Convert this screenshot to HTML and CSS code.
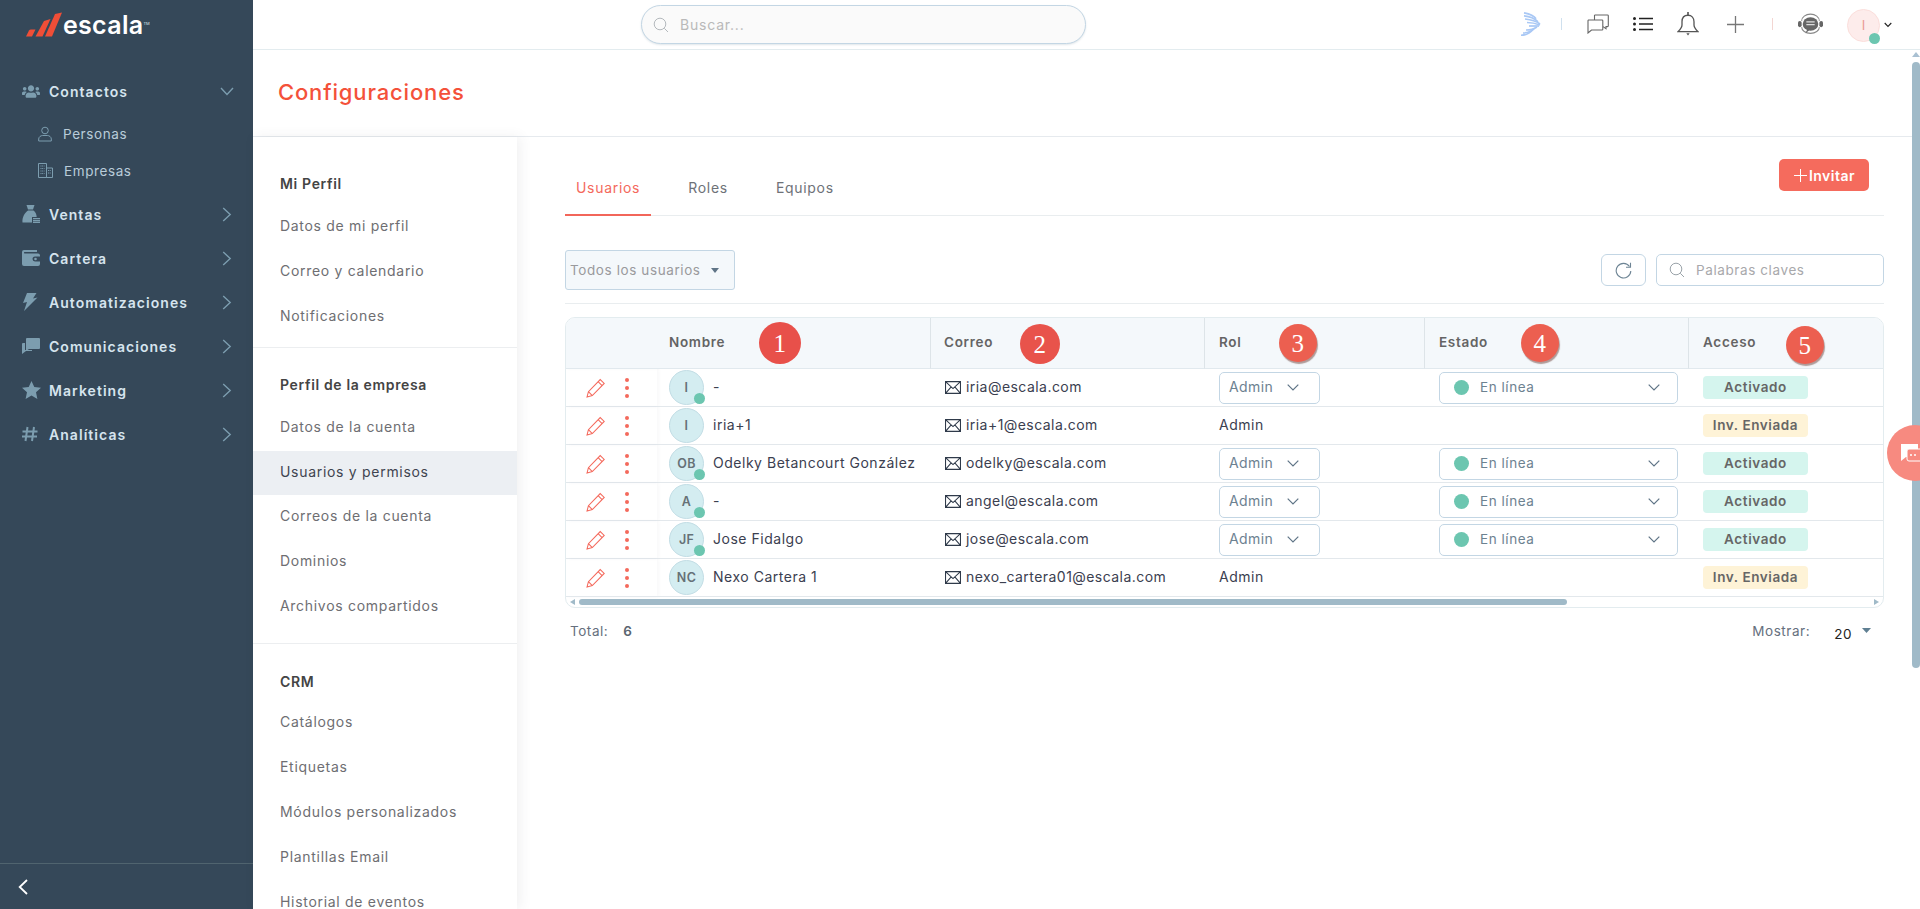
FILE: index.html
```html
<!DOCTYPE html>
<html lang="es">
<head>
<meta charset="utf-8">
<title>Configuraciones</title>
<link rel="stylesheet" href="styles.css">
</head>
<body>
<div class="app">
  <aside class="sidebar">
    <div class="logo">
      <svg class="logo-mark" width="36" height="25" viewBox="0 0 36 25"><path d="M0 24.500L3 18.500Q3.500 17.500 5 17.500L9.500 17.500L6 24.500Z" fill="#f04e37"/><path d="M9.500 24.500L18 9L24.500 7L16.500 24.500Z" fill="#f04e37"/><path d="M19 24.500L29 2L36 .500L26 24.500Z" fill="#f04e37"/></svg>
      <span class="logo-text">escala</span><span class="logo-tm">TM</span>
    </div>
    <nav class="nav">
      <a class="nav-row"><span class="nav-ico"><svg width="18" height="15" viewBox="0 0 640 512"><path fill="#7c9daf" d="M96 224c35.300 0 64-28.700 64-64s-28.700-64-64-64-64 28.700-64 64 28.700 64 64 64zm448 0c35.300 0 64-28.700 64-64s-28.700-64-64-64-64 28.700-64 64 28.700 64 64 64zm32 32h-64c-17.600 0-33.500 7.100-45.100 18.600 40.300 22.100 68.900 62 75.100 109.400h66c17.700 0 32-14.300 32-32v-32c0-35.300-28.700-64-64-64zm-256 0c61.900 0 112-50.100 112-112S381.900 32 320 32 208 82.100 208 144s50.100 112 112 112zm76.800 32h-8.300c-20.800 10-43.900 16-68.500 16s-47.600-6-68.500-16h-8.300C179.600 288 128 339.600 128 403.200V432c0 26.500 21.500 48 48 48h288c26.500 0 48-21.500 48-48v-28.800c0-63.600-51.600-115.200-115.200-115.200zm-223.700-13.400C161.500 263.100 145.600 256 128 256H64c-35.300 0-64 28.700-64 64v32c0 17.700 14.300 32 32 32h65.900c6.300-47.400 34.900-87.300 75.200-109.400z"/></svg></span><span>Contactos</span><svg class="chev-down" width="14" height="9" viewBox="0 0 14 9"><path d="M1 1l6 6.500L13 1" fill="none" stroke="#7c9daf" stroke-width="1.400"/></svg></a>
      <div class="subnav">
        <a class="sub-row"><svg width="14" height="16" viewBox="0 0 14 16"><circle cx="7" cy="4.500" r="3.300" fill="none" stroke="#7c9daf"/><path d="M.7 15v-2c0-2 2-3.500 4-3.500h4.600c2 0 4 1.500 4 3.500v2z" fill="none" stroke="#7c9daf"/></svg><span>Personas</span></a>
        <a class="sub-row"><svg width="15" height="15" viewBox="0 0 15 15"><path d="M.5 14.500V.500h8v14zM8.500 5h6v9.500h-6z" fill="none" stroke="#7c9daf"/><path d="M2.500 3h4M2.500 5.500h4M2.500 8h4M2.500 10.500h4M10 7.500h3M10 10h3" stroke="#7c9daf" stroke-dasharray="1 .7"/></svg><span>Empresas</span></a>
      </div>
      <a class="nav-row"><span class="nav-ico"><svg width="18" height="18" viewBox="0 0 18 18"><path d="M4.500 0h8l-1.500 4.500H6z" fill="#7c9daf"/><path d="M6 5.500h5.500c2 1.500 3 3.500 3.200 6.500H10v5.500H.5C0 12.500 2.500 8 6 5.500z" fill="#7c9daf"/><path d="M11 13h7v1.200h-7zM11 15h7v1.200h-7zM11 16.800h7V18h-7z" fill="#7c9daf"/></svg></span><span>Ventas</span><svg class="chev-right" width="10" height="15" viewBox="0 0 10 15"><path d="M1.200 1l7 6.500-7 6.500" fill="none" stroke="#7c9daf" stroke-width="1.400"/></svg></a>
      <a class="nav-row"><span class="nav-ico"><svg width="18" height="16" viewBox="0 0 18 16"><path d="M2 0h13v2H2.500a.800.800 0 0 0 0 1.500H16a2 2 0 0 1 2 2v1h-5a2.500 2.500 0 0 0 0 5h5v2.500a2 2 0 0 1-2 2H2a2 2 0 0 1-2-2V2a2 2 0 0 1 2-2z" fill="#7c9daf"/><circle cx="13.500" cy="9" r="1.300" fill="#7c9daf"/></svg></span><span>Cartera</span><svg class="chev-right" width="10" height="15" viewBox="0 0 10 15"><path d="M1.200 1l7 6.500-7 6.500" fill="none" stroke="#7c9daf" stroke-width="1.400"/></svg></a>
      <a class="nav-row"><span class="nav-ico"><svg width="16" height="18" viewBox="0 0 16 18"><path d="M5 0h9.500L11 5.500l4.500-1L2 18l3-9-4 1z" fill="#7c9daf"/></svg></span><span>Automatizaciones</span><svg class="chev-right" width="10" height="15" viewBox="0 0 10 15"><path d="M1.200 1l7 6.500-7 6.500" fill="none" stroke="#7c9daf" stroke-width="1.400"/></svg></a>
      <a class="nav-row"><span class="nav-ico"><svg width="18" height="16" viewBox="0 0 18 16"><path d="M5 0h12a1 1 0 0 1 1 1v9a1 1 0 0 1-1 1H7l-3 2V1a1 1 0 0 1 1-1z" fill="#7c9daf"/><path d="M0 6a1 1 0 0 1 1-1h2v7h7v1H4l-4 3z" fill="#7c9daf"/></svg></span><span>Comunicaciones</span><svg class="chev-right" width="10" height="15" viewBox="0 0 10 15"><path d="M1.200 1l7 6.500-7 6.500" fill="none" stroke="#7c9daf" stroke-width="1.400"/></svg></a>
      <a class="nav-row"><span class="nav-ico"><svg width="19" height="18" viewBox="0 0 19 18"><path d="M9.500 0l2.800 6 6.700.800-5 4.500 1.400 6.700-5.900-3.400L3.600 18 5 11.300 0 6.800 6.700 6z" fill="#7c9daf"/></svg></span><span>Marketing</span><svg class="chev-right" width="10" height="15" viewBox="0 0 10 15"><path d="M1.200 1l7 6.500-7 6.500" fill="none" stroke="#7c9daf" stroke-width="1.400"/></svg></a>
      <a class="nav-row"><span class="nav-ico"><svg width="16" height="16" viewBox="0 0 16 16"><path d="M5.500 1L3.500 15M12 1l-2 14M.5 5.500h15M0 10.500h15" fill="none" stroke="#7c9daf" stroke-width="2"/></svg></span><span>Analíticas</span><svg class="chev-right" width="10" height="15" viewBox="0 0 10 15"><path d="M1.200 1l7 6.500-7 6.500" fill="none" stroke="#7c9daf" stroke-width="1.400"/></svg></a>
    </nav>
    <div class="side-foot"><svg width="10" height="16" viewBox="0 0 10 16"><path d="M9 1L1.700 8 9 15" fill="none" stroke="#fff" stroke-width="1.800"/></svg></div>
  </aside>

  <div class="main">
    <header class="topbar">
      <div class="global-search">
        <svg width="16" height="16" viewBox="0 0 16 16"><circle cx="7" cy="7" r="5.800" fill="none" stroke="#b4b9bd"/><path d="M11.300 11.300L15 15" stroke="#b4b9bd"/></svg>
        <span>Buscar...</span>
      </div>
      <div class="top-icons">
        <svg class="t-bird" width="20" height="24" viewBox="0 0 20 24"><g fill="none" stroke="#a9c8f5" stroke-width="1.700"><path d="M3 .800c5 1 10 3 12 6"/><path d="M3 3.800c5 .500 11 3 14 6"/><path d="M4 7c5 .500 11 2 15 5"/><path d="M6 10.500c4 0 9 1 13 2.500"/><path d="M8 14c4 0 7 0 10 0"/><path d="M5 18c4 0 8-1 11-3"/><path d="M2 21c4 0 8-1 12-5"/><path d="M0 23.300c5 0 9-2 12-6"/></g></svg>
        <i class="sep sep-blue"></i>
        <svg class="t-chat" width="22" height="20" viewBox="0 0 22 20"><g fill="none" stroke="#666" stroke-width="1.100"><path d="M7.500 1h13a.800.800 0 0 1 .800.800v10a.800.800 0 0 1-.800.800h-1.500v2l-3-2"/><path d="M7.500 1v5"/><path d="M1.500 6h13.500a.800.800 0 0 1 .800.800v8.400a.800.800 0 0 1-.800.800H4.500l-3.500 3V6.800a.800.800 0 0 1 .500-.800z"/></g></svg>
        <svg class="t-list" width="20" height="14" viewBox="0 0 20 14"><path d="M6 1.500h14M6 7h14M6 12.500h14" stroke="#222" stroke-width="1.500"/><circle cx="1.500" cy="1.500" r="1.500" fill="#222"/><circle cx="1.500" cy="7" r="1.500" fill="#222"/><circle cx="1.500" cy="12.500" r="1.500" fill="#222"/></svg>
        <svg class="t-bell" width="22" height="24" viewBox="0 0 20 22"><path d="M10 3c-3.500 0-5.500 2.500-5.500 6v3c0 2-1.500 4-3.700 6h18.400c-2.200-2-3.700-4-3.700-6V9c0-3.500-2-6-5.500-6z" fill="none" stroke="#555" stroke-width="1.200"/><path d="M10 0v3" stroke="#555" stroke-width="1.500"/><path d="M8.500 19.500h3l-1.500 2z" fill="#555"/></svg>
        <svg class="t-plus" width="17" height="17" viewBox="0 0 17 17"><path d="M8.500 0v17M0 8.500h17" stroke="#777" stroke-width="1.300"/></svg>
        <i class="sep sep-pink"></i>
        <svg class="t-head" width="25" height="22" viewBox="0 0 24 20"><path d="M3.500 7a8.500 6.500 0 0 1 17 0M3.500 13a8.500 6 0 0 0 17 0" fill="none" stroke="#888"/><rect x="0" y="7" width="3.500" height="6" rx="1.700" fill="#666"/><rect x="20.500" y="7" width="3.500" height="6" rx="1.700" fill="#666"/><ellipse cx="12" cy="10" rx="7.500" ry="6.500" fill="#666"/><path d="M7 19l2.500-5h3.500z" fill="#666"/><path d="M8 8h8M8 10.500h8" stroke="#ddd" stroke-width="1.200"/></svg>
        <div class="me"><span>I</span><i class="me-dot"></i></div>
        <svg class="t-chev" width="8" height="6" viewBox="0 0 8 6"><path d="M.7 1l3.300 3.400L7.300 1" fill="none" stroke="#222" stroke-width="1.100"/></svg>
      </div>
    </header>

    <div class="below">
      <div class="page">
        <h1 class="page-title">Configuraciones</h1>
        <div class="page-body">
          <div class="panel">
            <section class="p-sec p-first">
              <h3>Mi Perfil</h3>
              <a>Datos de mi perfil</a><a>Correo y calendario</a><a>Notificaciones</a>
            </section>
            <section class="p-sec p-second">
              <h3>Perfil de la empresa</h3>
              <a>Datos de la cuenta</a><a class="on">Usuarios y permisos</a><a>Correos de la cuenta</a><a>Dominios</a><a>Archivos compartidos</a>
            </section>
            <section class="p-sec p-third">
              <h3>CRM</h3>
              <a>Catálogos</a><a>Etiquetas</a><a>Módulos personalizados</a><a>Plantillas Email</a><a>Historial de eventos</a>
            </section>
          </div>

          <div class="content">
            <div class="tabs">
              <a class="tab tab-on">Usuarios</a><a class="tab">Roles</a><a class="tab">Equipos</a>
              <button class="invite"><svg width="15" height="15" viewBox="0 0 15 15"><path d="M7.500 1v13M1 7.500h13" stroke="#fff"/></svg>Invitar</button>
            </div>
            <div class="toolbar">
              <div class="filter"><span>Todos los usuarios</span><svg width="8" height="5" viewBox="0 0 8 5"><path d="M0 0h8L4 5z" fill="#5f7486"/></svg></div>
              <div class="tools">
                <button class="refresh"><svg width="17" height="17" viewBox="0 0 17 17"><path d="M14.500 4.500A7.300 7.300 0 1 0 15.800 9" fill="none" stroke="#6d8494" stroke-width="1.100"/><path d="M15.500 .800v4.500H11" fill="none" stroke="#6d8494" stroke-width="1.100"/></svg></button>
                <div class="kw"><svg width="16" height="16" viewBox="0 0 16 16"><circle cx="7" cy="7" r="5.800" fill="none" stroke="#9aa3a9"/><path d="M11.300 11.300L15 15" stroke="#9aa3a9"/></svg><span>Palabras claves</span></div>
              </div>
            </div>

            <div class="table-wrap">
              <table class="users">
                <colgroup><col class="c1"><col class="c2"><col class="c3"><col class="c4"><col class="c5"><col class="c6"></colgroup>
                <thead>
                  <tr>
                    <th class="th-act"></th>
                    <th>Nombre<b class="num n1">1</b></th>
                    <th class="th-mail">Correo<b class="num n2">2</b></th>
                    <th class="th-rol">Rol<b class="num n3">3</b></th>
                    <th class="th-est">Estado<b class="num n4">4</b></th>
                    <th class="th-acc">Acceso<b class="num n5">5</b></th>
                  </tr>
                </thead>
                <tbody>
                  <tr>
                    <td class="act"><div class="act-in"><svg width="20" height="20" viewBox="0 0 19 19"><path d="M1 18l1.300-5L13.500 1.500l3.800 3.700L6 16.700zM11.500 3.500l3.800 3.800M2.300 13L6 16.700" fill="none" stroke="#f4695c"/></svg><span class="dots"><i></i><i></i><i></i></span></div></td>
                    <td><div class="who"><span class="av">I<i class="on-dot"></i></span><span class="tx">-</span></div></td>
                    <td class="td-mail"><div class="mail"><svg width="16" height="13" viewBox="0 0 15 12"><path d="M.5.500h14v11H.5zM.5.500L7.500 7l7-6.500M.5 11.500l5.300-6M14.500 11.500l-5.300-6" fill="none" stroke="#2f3a4a"/></svg><span class="tx">iria@escala.com</span></div></td>
                    <td class="td-rol"><div class="sel sel-rol"><span class="tx">Admin</span><svg width="12" height="7" viewBox="0 0 12 7"><path d="M.7.700L6 6l5.300-5.300" fill="none" stroke="#5f7486" stroke-width="1.200"/></svg></div></td>
                    <td class="td-est"><div class="sel sel-est"><i class="st-dot"></i><span class="tx">En línea</span><svg width="12" height="7" viewBox="0 0 12 7"><path d="M.7.700L6 6l5.300-5.300" fill="none" stroke="#5f7486" stroke-width="1.200"/></svg></div></td>
                    <td class="td-acc"><span class="pill pill-on">Activado</span></td>
                  </tr>
                  <tr>
                    <td class="act"><div class="act-in"><svg width="20" height="20" viewBox="0 0 19 19"><path d="M1 18l1.300-5L13.500 1.500l3.800 3.700L6 16.700zM11.500 3.500l3.800 3.800M2.300 13L6 16.700" fill="none" stroke="#f4695c"/></svg><span class="dots"><i></i><i></i><i></i></span></div></td>
                    <td><div class="who"><span class="av">I</span><span class="tx">iria+1</span></div></td>
                    <td class="td-mail"><div class="mail"><svg width="16" height="13" viewBox="0 0 15 12"><path d="M.5.500h14v11H.5zM.5.500L7.500 7l7-6.500M.5 11.500l5.300-6M14.500 11.500l-5.300-6" fill="none" stroke="#2f3a4a"/></svg><span class="tx">iria+1@escala.com</span></div></td>
                    <td class="td-rol"><span class="plain tx">Admin</span></td>
                    <td class="td-est"></td>
                    <td class="td-acc"><span class="pill pill-inv">Inv. Enviada</span></td>
                  </tr>
                  <tr>
                    <td class="act"><div class="act-in"><svg width="20" height="20" viewBox="0 0 19 19"><path d="M1 18l1.300-5L13.500 1.500l3.800 3.700L6 16.700zM11.500 3.500l3.800 3.800M2.300 13L6 16.700" fill="none" stroke="#f4695c"/></svg><span class="dots"><i></i><i></i><i></i></span></div></td>
                    <td><div class="who"><span class="av">OB<i class="on-dot"></i></span><span class="tx">Odelky Betancourt González</span></div></td>
                    <td class="td-mail"><div class="mail"><svg width="16" height="13" viewBox="0 0 15 12"><path d="M.5.500h14v11H.5zM.5.500L7.500 7l7-6.500M.5 11.500l5.300-6M14.500 11.500l-5.300-6" fill="none" stroke="#2f3a4a"/></svg><span class="tx">odelky@escala.com</span></div></td>
                    <td class="td-rol"><div class="sel sel-rol"><span class="tx">Admin</span><svg width="12" height="7" viewBox="0 0 12 7"><path d="M.7.700L6 6l5.300-5.300" fill="none" stroke="#5f7486" stroke-width="1.200"/></svg></div></td>
                    <td class="td-est"><div class="sel sel-est"><i class="st-dot"></i><span class="tx">En línea</span><svg width="12" height="7" viewBox="0 0 12 7"><path d="M.7.700L6 6l5.300-5.300" fill="none" stroke="#5f7486" stroke-width="1.200"/></svg></div></td>
                    <td class="td-acc"><span class="pill pill-on">Activado</span></td>
                  </tr>
                  <tr>
                    <td class="act"><div class="act-in"><svg width="20" height="20" viewBox="0 0 19 19"><path d="M1 18l1.300-5L13.500 1.500l3.800 3.700L6 16.700zM11.500 3.500l3.800 3.800M2.300 13L6 16.700" fill="none" stroke="#f4695c"/></svg><span class="dots"><i></i><i></i><i></i></span></div></td>
                    <td><div class="who"><span class="av">A<i class="on-dot"></i></span><span class="tx">-</span></div></td>
                    <td class="td-mail"><div class="mail"><svg width="16" height="13" viewBox="0 0 15 12"><path d="M.5.500h14v11H.5zM.5.500L7.500 7l7-6.500M.5 11.500l5.300-6M14.500 11.500l-5.300-6" fill="none" stroke="#2f3a4a"/></svg><span class="tx">angel@escala.com</span></div></td>
                    <td class="td-rol"><div class="sel sel-rol"><span class="tx">Admin</span><svg width="12" height="7" viewBox="0 0 12 7"><path d="M.7.700L6 6l5.300-5.300" fill="none" stroke="#5f7486" stroke-width="1.200"/></svg></div></td>
                    <td class="td-est"><div class="sel sel-est"><i class="st-dot"></i><span class="tx">En línea</span><svg width="12" height="7" viewBox="0 0 12 7"><path d="M.7.700L6 6l5.300-5.300" fill="none" stroke="#5f7486" stroke-width="1.200"/></svg></div></td>
                    <td class="td-acc"><span class="pill pill-on">Activado</span></td>
                  </tr>
                  <tr>
                    <td class="act"><div class="act-in"><svg width="20" height="20" viewBox="0 0 19 19"><path d="M1 18l1.300-5L13.500 1.500l3.800 3.700L6 16.700zM11.500 3.500l3.800 3.800M2.300 13L6 16.700" fill="none" stroke="#f4695c"/></svg><span class="dots"><i></i><i></i><i></i></span></div></td>
                    <td><div class="who"><span class="av">JF<i class="on-dot"></i></span><span class="tx">Jose Fidalgo</span></div></td>
                    <td class="td-mail"><div class="mail"><svg width="16" height="13" viewBox="0 0 15 12"><path d="M.5.500h14v11H.5zM.5.500L7.500 7l7-6.500M.5 11.500l5.300-6M14.500 11.500l-5.300-6" fill="none" stroke="#2f3a4a"/></svg><span class="tx">jose@escala.com</span></div></td>
                    <td class="td-rol"><div class="sel sel-rol"><span class="tx">Admin</span><svg width="12" height="7" viewBox="0 0 12 7"><path d="M.7.700L6 6l5.300-5.300" fill="none" stroke="#5f7486" stroke-width="1.200"/></svg></div></td>
                    <td class="td-est"><div class="sel sel-est"><i class="st-dot"></i><span class="tx">En línea</span><svg width="12" height="7" viewBox="0 0 12 7"><path d="M.7.700L6 6l5.300-5.300" fill="none" stroke="#5f7486" stroke-width="1.200"/></svg></div></td>
                    <td class="td-acc"><span class="pill pill-on">Activado</span></td>
                  </tr>
                  <tr>
                    <td class="act"><div class="act-in"><svg width="20" height="20" viewBox="0 0 19 19"><path d="M1 18l1.300-5L13.500 1.500l3.800 3.700L6 16.700zM11.500 3.500l3.800 3.800M2.300 13L6 16.700" fill="none" stroke="#f4695c"/></svg><span class="dots"><i></i><i></i><i></i></span></div></td>
                    <td><div class="who"><span class="av">NC</span><span class="tx">Nexo Cartera 1</span></div></td>
                    <td class="td-mail"><div class="mail"><svg width="16" height="13" viewBox="0 0 15 12"><path d="M.5.500h14v11H.5zM.5.500L7.500 7l7-6.500M.5 11.500l5.300-6M14.500 11.500l-5.300-6" fill="none" stroke="#2f3a4a"/></svg><span class="tx">nexo_cartera01@escala.com</span></div></td>
                    <td class="td-rol"><span class="plain tx">Admin</span></td>
                    <td class="td-est"></td>
                    <td class="td-acc"><span class="pill pill-inv">Inv. Enviada</span></td>
                  </tr>
                </tbody>
              </table>
              <div class="hscroll">
                <i class="arr-l"></i>
                <i class="hthumb"></i>
                <i class="arr-r"></i>
              </div>
            </div>

            <div class="tfoot">
              <div class="total">Total:<b>6</b></div>
              <div class="show"><span>Mostrar:</span><em>20</em><svg width="9" height="5" viewBox="0 0 9 5"><path d="M0 0h9L4.500 5z" fill="#5f7f92"/></svg></div>
            </div>
          </div>
        </div>
      </div>
      <div class="rail"><i class="rail-up"></i><i class="rail-thumb"></i></div>
    </div>
  </div>

  <div class="fab"><svg width="24" height="22" viewBox="0 0 24 22"><path d="M1 1h17v13H6l-5 4z" fill="#fff"/><rect x="7" y="6" width="17" height="12" rx="2" fill="#f78a80" stroke="#fff"/><circle cx="11" cy="12" r="1" fill="#fff"/><circle cx="15" cy="12" r="1" fill="#fff"/></svg></div>
</div>
</body>
</html>
```

FILE: styles.css
```css
* { box-sizing: border-box; }
html, body { margin: 0; height: 100%; overflow: hidden; }
body { font-family: Inter, "Open Sans", sans-serif; font-size: 14px; color: #333; background: #fff; }
a { display: block; }
i { display: block; font-style: normal; }

.app { position: relative; display: flex; width: 1920px; height: 909px; overflow: hidden; }

/* Sidebar */
.sidebar { flex: 0 0 253px; display: flex; flex-direction: column; background: #354859; color: #d6e4ee; }
.logo { height: 69px; padding: 12px 0 0 26px; display: flex; align-items: flex-start; }
.logo-mark { flex: none; }
.logo-text { margin-left: 1px; font-size: 25px; line-height: 27px; font-weight: 600; color: #fff; letter-spacing: .3px; }
.logo-tm { font-size: 4px; line-height: 8px; margin-top: 8px; color: #dfe6ea; }
.nav-row { display: flex; align-items: center; height: 44px; padding-left: 22px; font-weight: 600; font-size: 14px; letter-spacing: 1.05px; color: #d6e4ee; }
.nav-ico { flex: 0 0 27px; display: flex; align-items: center; }
.chev-right { margin-left: auto; margin-right: 21px; }
.chev-down { margin-left: auto; margin-right: 19px; }
.subnav { padding: 2px 0 3px; }
.sub-row { display: flex; align-items: center; gap: 13px; height: 37px; padding-left: 38px; font-size: 13.500px; letter-spacing: .6px; color: #b9ccd9; }
.sub-row svg { flex: 0 0 auto; margin-right: -2px; }
.side-foot { margin-top: auto; height: 46px; border-top: 1px solid #50646f; display: flex; align-items: center; padding-left: 18px; }

/* Main */
.main { flex: 1; min-width: 0; display: flex; flex-direction: column; }
.topbar { flex: 0 0 50px; border-bottom: 1px solid #e3ecef; display: flex; align-items: flex-start; padding: 5px 0 0 388px; }
.global-search { width: 445px; height: 39px; border: 1px solid #c3d6e4; border-radius: 20px; background: #fafafa; box-shadow: 0 1px 2px rgba(100,130,150,.2); display: flex; align-items: center; padding-left: 11px; gap: 11px; color: #b9b9b9; font-size: 14px; letter-spacing: .8px; }
.top-icons { margin-left: auto; display: flex; align-items: center; height: 38px; padding-right: 28px; }
.sep { width: 1px; height: 12px; }
.sep-blue { background: #cfe0ee; margin-left: 20px; }
.sep-pink { background: #f3d6d2; margin-left: 28px; }
.t-chat { margin-left: 25px; }
.t-list { margin-left: 24px; }
.t-bell { margin-left: 24px; }
.t-plus { margin-left: 28px; }
.t-head { margin-left: 25px; }
.me { position: relative; margin: 2px 0 0 24px; width: 33px; height: 33px; border-radius: 50%; background: #fdeceb; border: 1px solid #fbdedb; display: flex; align-items: center; justify-content: center; color: #ea9a92; font-size: 13px; }
.me-dot { position: absolute; right: -1px; bottom: -3px; width: 11px; height: 11px; border-radius: 50%; background: #6cc6b0; }
.t-chev { margin: 2px 0 0 4px; }

.below { flex: 1; min-height: 0; display: flex; }
.page { flex: 1; min-width: 0; display: flex; flex-direction: column; }
.page-title { flex: 0 0 87px; margin: 0; padding: 0 0 2px 25px; display: flex; align-items: center; border-bottom: 1px solid #e6eaee; font-size: 22px; font-weight: 500; letter-spacing: .85px; color: #f4513a; }
.page-body { flex: 1; min-height: 0; display: flex; }

/* Settings panel */
.panel { flex: 0 0 264px; background: #fff; box-shadow: 3px 0 12px rgba(60,70,80,.08); overflow: hidden; position: relative; }
.p-sec h3 { margin: 0 0 2px; height: 38px; display: flex; align-items: center; padding: 0 0 2px 27px; font-size: 14px; font-weight: 600; letter-spacing: .65px; color: #444; }
.p-sec a { height: 45px; padding: 0 0 4px 27px; display: flex; align-items: center; font-size: 14px; letter-spacing: .7px; color: #6e6e72; }
.p-sec a.on { height: 44px; background: #eceff3; color: #3f4450; }
.p-first { padding: 28px 0 7px; border-bottom: 1px solid #eceef0; }
.p-second { padding: 18px 0 13px; border-bottom: 1px solid #eceef0; }
.p-third { padding: 18px 0 0; }
.p-third h3 { margin-bottom: 1px; padding-bottom: 0; }

/* Content */
.content { flex: 1; min-width: 0; padding: 0 28px 0 48px; }
.tabs { position: relative; display: flex; align-items: flex-start; height: 79px; border-bottom: 1px solid #e9edef; gap: 26px; }
.tab { height: 79px; padding: 40px 11px 0; line-height: 22px; font-size: 14px; letter-spacing: .7px; color: #6e7278; }
.tab-on { color: #f4695c; border-bottom: 2px solid #f2665a; }
.invite { margin: 22px 15px 0 auto; width: 90px; height: 32px; border: 0; border-radius: 5px; background: #f56b5d; color: #fff; font: 600 14px Inter, sans-serif; letter-spacing: .5px; display: flex; align-items: center; justify-content: center; gap: 1px; padding: 0; }
.toolbar { height: 88px; border-bottom: 1px solid #e9edef; padding: 34px 0 13px; display: flex; align-items: center; justify-content: space-between; }
.filter { width: 170px; height: 40px; border: 1px solid #c3d6e4; border-radius: 3px; background: #f4f8fb; display: flex; align-items: center; padding-left: 4px; gap: 10px; color: #9a9a9d; font-size: 13.500px; letter-spacing: .6px; white-space: nowrap; }
.tools { display: flex; gap: 10px; }
.refresh { width: 45px; height: 32px; padding: 0; background: #fff; border: 1px solid #c3d6e4; border-radius: 6px; display: flex; align-items: center; justify-content: center; }
.kw { width: 228px; height: 32px; border: 1px solid #c3d6e4; border-radius: 5px; display: flex; align-items: center; padding-left: 12px; gap: 11px; color: #a8a8ab; font-size: 13.500px; letter-spacing: .6px; }

/* Table */
.table-wrap { margin-top: 13px; border: 1px solid #e3ecef; border-radius: 10px; overflow: hidden; background: #fff; }
.users { width: 100%; table-layout: fixed; border-collapse: separate; border-spacing: 0; }
.c1 { width: 91px; } .c2, .c3 { width: 274px; } .c4 { width: 220px; } .c5 { width: 264px; } .c6 { width: auto; }
.users th { position: relative; height: 51px; padding: 0 0 2px 12px; text-align: left; background: #f4f8fb; border-bottom: 1px solid #e1e9ee; border-right: 1px solid #dde4e8; font-size: 13.500px; font-weight: 600; letter-spacing: .7px; color: #646464; }
.users th:last-child { border-right: 0; }
.users .th-act { border-right: 0; box-shadow: 2px 0 3px rgba(60,70,80,.04); }
.users .th-mail { padding-left: 13px; }
.users .th-rol, .users .th-est, .users .th-acc { padding-left: 14px; }
.users td { height: 38px; padding: 0 0 0 12px; border-bottom: 1px solid #e3e8ec; font-size: 14px; letter-spacing: .52px; color: #3b4050; white-space: nowrap; }
.users .td-mail { padding-left: 14px; letter-spacing: .45px; }
.users .td-rol, .users .td-est, .users .td-acc { padding-left: 14px; }
.users td.act { padding: 0; box-shadow: 2px 0 3px rgba(60,70,80,.03); }
.tx { display: block; margin-top: -2px; }
.act-in { display: flex; align-items: center; padding-left: 20px; gap: 19px; }
.dots { display: flex; flex-direction: column; gap: 4px; }
.dots i { width: 4px; height: 4px; border-radius: 50%; background: #f4695c; }
.who { display: flex; align-items: center; gap: 9px; }
.av { position: relative; flex: 0 0 35px; height: 35px; border-radius: 50%; background: #d4edf1; border: 1px solid #c2dde5; display: flex; align-items: center; justify-content: center; font-size: 12.500px; font-weight: 600; letter-spacing: .3px; color: #667177; }
.on-dot { position: absolute; right: -2px; bottom: 0; width: 11px; height: 11px; border-radius: 50%; background: #6cc6b0; }
.mail { display: flex; align-items: center; gap: 5px; }
.mail svg { flex: none; }
.sel { height: 32px; background: #fff; border: 1px solid #c3d6e4; border-radius: 5px; display: flex; align-items: center; color: #6d8291; font-size: 14px; letter-spacing: .4px; }
.sel-rol { width: 101px; padding-left: 9px; gap: 14px; }
.sel-est { width: 239px; padding-left: 14px; font-size: 13.500px; letter-spacing: .55px; }
.sel-est svg { margin-left: auto; margin-right: 17px; }
.st-dot { flex: 0 0 15px; height: 15px; border-radius: 50%; background: #6cc6b0; margin-right: 11px; }
.pill { display: block; width: 105px; height: 23px; line-height: 23px; text-align: center; border-radius: 4px; font-size: 13.500px; font-weight: 600; letter-spacing: .6px; color: #666; }
.pill-on { background: #d5f5ee; }
.pill-inv { background: #fef3d7; }
.num { position: absolute; display: flex; align-items: center; justify-content: center; border-radius: 50%; color: #fff; font: 400 25px/1 "Liberation Serif", serif; box-shadow: 1px 2px 1px rgba(90,40,30,.45); background: #ec5f50; width: 38px; height: 38px; top: 6px; }
.n1 { left: 102px; width: 42px; height: 42px; top: 4px; background: #e8504a; box-shadow: none; }
.n2 { left: 89px; width: 40px; height: 40px; top: 6px; background: #e8534b; box-shadow: none; }
.n3 { left: 74px; }
.n4 { left: 96px; }
.n5 { left: 97px; top: 8px; }
.hscroll { height: 10px; display: flex; align-items: center; position: relative; padding: 0 4px; }
.arr-l { width: 0; height: 0; border: 3.500px solid transparent; border-right: 5px solid #a0bac8; border-left: 0; }
.hthumb { width: 988px; height: 6px; border-radius: 3px; background: #a0bac8; margin-left: 4px; }
.arr-r { width: 0; height: 0; border: 3.500px solid transparent; border-left: 5px solid #a0bac8; border-right: 0; margin-left: auto; }
.tfoot { display: flex; justify-content: space-between; padding: 13px 13px 0 5px; line-height: 20px; font-size: 13.500px; letter-spacing: .55px; color: #66707e; }
.total b { margin-left: 15px; font-weight: 600; color: #5a6570; }
.show { display: flex; align-items: center; align-self: flex-start; }
.show span { margin-top: -3px; }
.show em { font-style: normal; margin-left: 24px; color: #222; padding-top: 3px; }
.show svg { margin-left: 10px; margin-top: -5px; }

/* Page scrollbar */
.rail { flex: 0 0 8px; display: flex; flex-direction: column; align-items: center; padding-top: 2px; }
.rail-up { width: 0; height: 0; border: 4px solid transparent; border-bottom: 5px solid #a9c0d2; border-top: 0; }
.rail-thumb { width: 8px; height: 606px; margin-top: 5px; background: #a0bac8; border-radius: 4px; }

/* Chat launcher */
.fab { position: absolute; left: 1887px; top: 425px; width: 56px; height: 56px; border-radius: 50%; background: #f78a80; padding: 18px 0 0 13px; }
```
